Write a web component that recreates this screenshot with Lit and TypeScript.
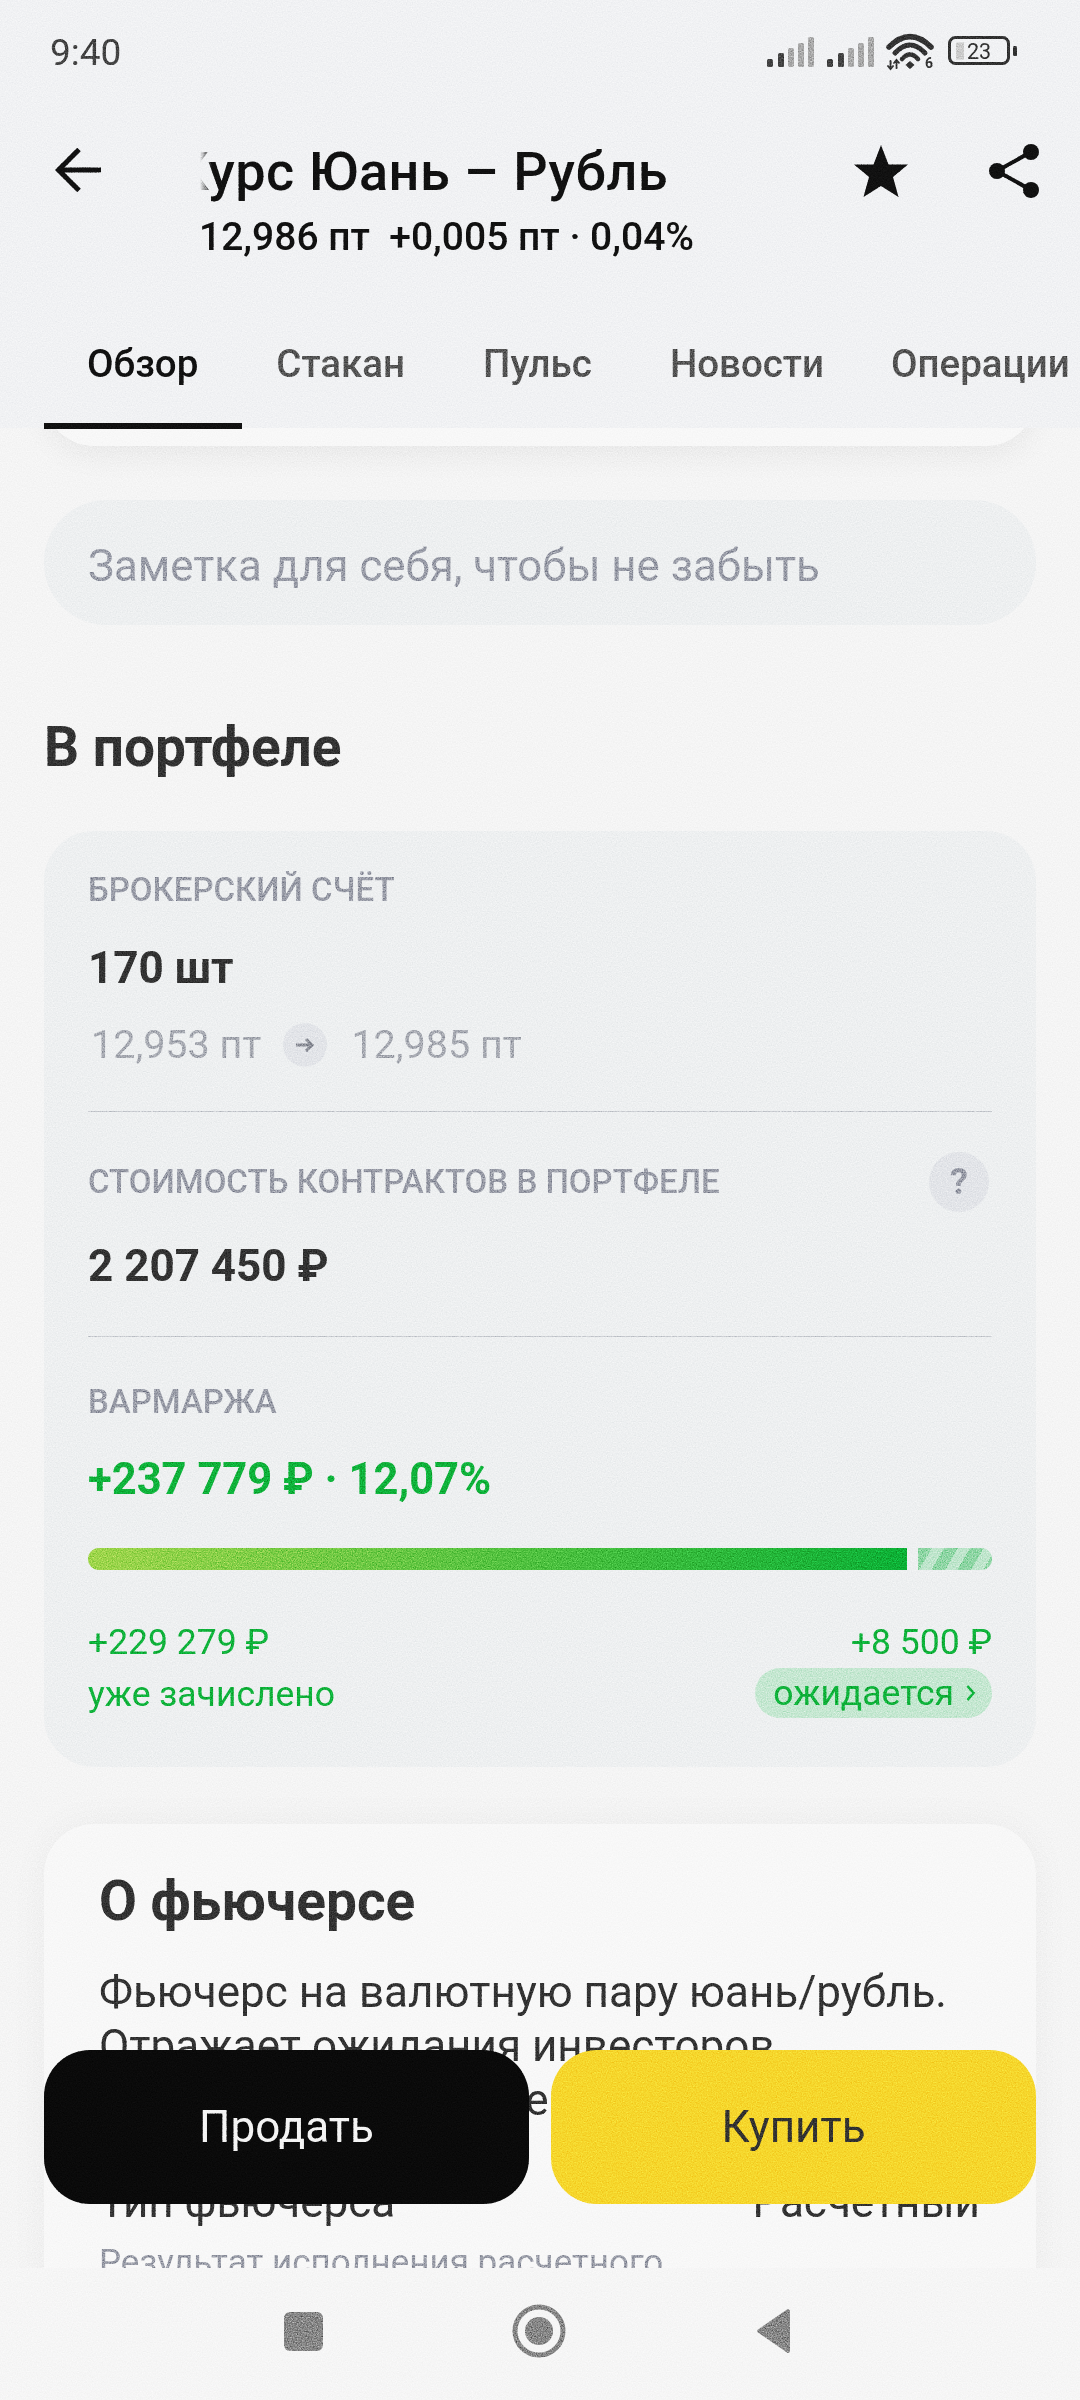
import { LitElement, html, css, svg } from "lit";
import { customElement } from "lit/decorators.js";

const bars = (dx: number) =>
  [
    [0, 59, "#444"],
    [11, 53, "#444"],
    [21, 48, "#aaa"],
    [31, 43, "#aaa"],
    [41, 37, "#aaa"],
  ].map(
    ([x, y, c]) =>
      svg`<rect x=${(x as number) + dx} y=${y} width="6" height=${67 - (y as number)} rx="1.5" fill=${c}></rect>`
  );

@customElement("app-root")
export class AppRoot extends LitElement {
  static styles = css`
    :host {
      display: flex;
      flex-direction: column;
      width: 1080px;
      height: 2400px;
      position: relative;
      overflow: hidden;
      isolation: isolate;
      background: #f5f5f5;
      font-family: Roboto, "Noto Sans", sans-serif;
      color: #333;
    }
    .top {
      flex: none;
      height: 428px;
      background: #f1f2f4;
      display: flex;
      flex-direction: column;
      position: relative;
      z-index: 2;
    }
    .status {
      height: 104px;
      padding: 0 50px;
      display: flex;
      align-items: center;
      justify-content: space-between;
      font-size: 37px;
      color: #444;
    }
    .status-icons {
      display: block;
      position: absolute;
      left: 0;
      top: 0;
    }
    .bar {
      height: 132px;
      display: flex;
      padding-left: 55px;
      position: relative;
    }
    .back {
      flex: none;
      width: 46px;
      height: 44px;
      margin-top: 44px;
    }
    .titles {
      margin-left: 99px;
      display: flex;
      flex-direction: column;
      margin-top: 36px;
    }
    .title-clip {
      flex: none;
      width: 480px;
      overflow: hidden;
      font-size: 54px;
      font-weight: 500;
      letter-spacing: 0.5px;
      line-height: 64px;
      color: #111;
      white-space: nowrap;
      position: relative;
    }
    .title-clip span {
      display: block;
      margin-left: -26px;
    }
    .title-clip::before {
      content: "";
      position: absolute;
      left: 0;
      top: 0;
      bottom: 0;
      width: 12px;
      background: linear-gradient(90deg, #f1f2f4, rgba(241, 242, 244, 0));
    }
    .sub {
      flex: none;
      font-size: 39px;
      font-weight: 500;
      line-height: 44px;
      color: #111;
      margin: 11px 0 0 -1px;
      white-space: pre;
    }
    .tabs {
      margin-top: 105px;
      padding-left: 87px;
      display: flex;
      gap: 78px;
      font-size: 38.5px;
      font-weight: 500;
      color: #555;
      white-space: nowrap;
      line-height: 46px;
    }
    .tabs span:last-child {
      margin-left: -11px;
    }
    .tabs .on {
      color: #111;
      position: relative;
    }
    .tabs .on::after {
      content: "";
      position: absolute;
      left: -43px;
      right: -44px;
      top: 82px;
      height: 6px;
      background: #111;
    }
    .scroll {
      flex: 1;
      min-height: 0;
      overflow: hidden;
      padding: 0 44px;
      display: flex;
      flex-direction: column;
    }
    .prev {
      flex: none;
      height: 100px;
      margin-top: -82px;
      background: #f8f8f8;
      border-radius: 50px;
      box-shadow: 0 10px 30px rgba(0, 0, 0, 0.05);
    }
    .note {
      flex: none;
      margin-top: 54px;
      height: 125px;
      box-sizing: border-box;
      padding: 6px 0 0 44px;
      border-radius: 62px;
      background: #eef0f1;
      display: flex;
      align-items: center;
      font-size: 43.8px;
      color: #9a9da8;
    }
    h2 {
      margin: 92px 0 0;
      font-size: 55px;
      font-weight: 700;
      line-height: 60px;
      color: #333;
    }
    .card {
      flex: none;
      margin-top: 54px;
      height: 936px;
      box-sizing: border-box;
      border-radius: 50px;
      background: #eef0f1;
      padding: 39px 44px 0;
    }
    .lab {
      font-size: 33px;
      font-weight: 500;
      color: #9a9da8;
      line-height: 40px;
      display: flex;
      align-items: center;
      justify-content: space-between;
    }
    .val {
      font-size: 44px;
      font-weight: 700;
      line-height: 56px;
      color: #333;
    }
    .q {
      width: 60px;
      height: 60px;
      border-radius: 50%;
      background: #e3e5e9;
      font-size: 36px;
      font-weight: 700;
      color: #9a9da8;
      display: flex;
      align-items: center;
      justify-content: center;
      margin-right: 3px;
    }
    .range {
      display: flex;
      align-items: center;
      font-size: 39.5px;
      color: #a7aab2;
      margin: 24px 0 0 3px;
      line-height: 50px;
    }
    .chip {
      width: 44px;
      height: 44px;
      border-radius: 50%;
      background: #e3e5e9;
      margin: 0 24px 0 22px;
      display: flex;
      align-items: center;
      justify-content: center;
    }
    hr {
      border: 0;
      height: 1px;
      background: #c8cbd0;
      margin: 0;
    }
    .green {
      color: #0fb33b;
    }
    .val.green {
      font-size: 43.5px;
    }
    .progress {
      display: flex;
      gap: 11px;
      height: 22px;
      margin-top: 40px;
    }
    .p1 {
      flex: 819;
      border-radius: 11px 0 0 11px;
      background: linear-gradient(90deg, #a0d64c, #0cb136);
    }
    .p2 {
      flex: 74;
      border-radius: 0 11px 11px 0;
      background: repeating-linear-gradient(120deg, #8fd6a5 0 12px, #c0e6cd 12px 22.5px);
    }
    .split {
      display: flex;
      justify-content: space-between;
      align-items: flex-start;
      margin-top: 47px;
      font-size: 35.5px;
      line-height: 50px;
    }
    .split > div:last-child {
      display: flex;
      flex-direction: column;
      align-items: flex-end;
    }
    .split .l2 {
      margin-top: 2px;
    }
    .pill {
      display: flex;
      align-items: center;
      gap: 12px;
      height: 50px;
      margin-top: 1px;
      padding: 0 16px 0 18px;
      border-radius: 25px;
      background: #c6e8d2;
    }
    .about {
      flex: none;
      margin-top: 57px;
      background: #f8f8f8;
      border-radius: 50px;
      padding: 42px 56px 42px 55px;
      box-shadow: 0 0 40px rgba(0, 0, 0, 0.04);
    }
    .about h3 {
      margin: 0;
      font-size: 55px;
      font-weight: 700;
      line-height: 70px;
    }
    .about p {
      margin: 29px 0 0;
      font-size: 44px;
      line-height: 54px;
      color: #333;
      white-space: nowrap;
    }
    .row {
      display: flex;
      justify-content: space-between;
      font-size: 44px;
      line-height: 54px;
      margin-top: 48px;
    }
    .hint {
      font-size: 35px;
      color: #9a9da8;
      line-height: 44px;
      margin-top: 12px;
    }
    .btns {
      position: absolute;
      left: 44px;
      right: 44px;
      top: 2050px;
      display: flex;
      gap: 22px;
      z-index: 3;
    }
    .btn {
      flex: 1;
      height: 154px;
      border-radius: 46px;
      display: flex;
      align-items: center;
      justify-content: center;
      font-size: 44px;
      background: #0a0a0a;
      color: #f4f4f4;
    }
    .btn.buy {
      background: #f6d72c;
      color: #333;
    }
    .nav {
      flex: none;
      height: 132px;
      background: #f6f6f6;
      position: relative;
      z-index: 2;
    }
    .nav svg {
      display: block;
    }
    .grain {
      position: absolute;
      left: 0;
      top: 0;
      z-index: 5;
      pointer-events: none;
      mix-blend-mode: overlay;
      opacity: 0.6;
    }
  `;

  render() {
    return html`
      <div class="top">
        <div class="status"><span>9:40</span></div>
        <div class="bar">
          <svg class="back" viewBox="0 0 46 44" fill="none" stroke="#111" stroke-width="5">
            <path d="M46 22H4M24 1.500 3.500 22 24 42.500"></path>
          </svg>
          <div class="titles">
            <div class="title-clip"><span>Курс Юань – Рубль</span></div>
            <div class="sub">12,986 пт  +0,005 пт · 0,04%</div>
          </div>
        </div>
        <div class="tabs">
          <span class="on">Обзор</span><span>Стакан</span><span>Пульс</span><span>Новости</span><span>Операции</span>
        </div>
        <svg class="status-icons" width="1080" height="230" viewBox="0 0 1080 230">
          ${bars(767)} ${bars(827)}
          <g fill="none" stroke="#333" stroke-linecap="round">
            <path d="M889 47Q910 26 931 47" stroke-width="5.500"></path>
            <path d="M895 53Q910 37 925 53" stroke-width="5"></path>
            <path d="M902 59Q910 50 918 59" stroke-width="4.500"></path>
          </g>
          <path d="M910 61l4.500 4-4.500 4-4.500-4z" fill="#333"></path>
          <path d="M890.500 60v9M887.500 65.500l3 3.500 3-3.500M896.500 69v-9M893.500 63.500l3-3.500 3 3.500" fill="none" stroke="#333" stroke-width="1.800"></path>
          <text x="925" y="68" font-size="14" font-weight="700" fill="#333" font-family="Roboto">6</text>
          <rect x="949.500" y="37.500" width="59" height="26" rx="6" fill="none" stroke="#333" stroke-width="3"></rect>
          <rect x="956" y="42.500" width="8" height="17" fill="#ccc"></rect>
          <text x="979" y="59" font-size="21.500" fill="#333" text-anchor="middle" font-family="Roboto">23</text>
          <rect x="1013" y="46" width="4" height="10" rx="1.500" fill="#333"></rect>
          <path d="M881 145L888.500 164.500H908L893 177L898.500 197L881 186L863.500 197L869 177L854 164.500H873.500Z" fill="#111"></path>
          <g fill="#111">
            <circle cx="1031" cy="152" r="8"></circle>
            <circle cx="997" cy="171" r="8"></circle>
            <circle cx="1031" cy="190" r="8"></circle>
          </g>
          <path d="M1031 152 997 171l34 19" fill="none" stroke="#111" stroke-width="4"></path>
        </svg>
      </div>
      <div class="scroll">
        <div class="prev"></div>
        <div class="note">Заметка для себя, чтобы не забыть</div>
        <h2>В портфеле</h2>
        <div class="card">
          <div class="lab">БРОКЕРСКИЙ СЧЁТ</div>
          <div class="val" style="margin-top:30px">170 шт</div>
          <div class="range">
            <span>12,953 пт</span>
            <span class="chip">
              <svg width="20" height="16" viewBox="0 0 20 16" fill="none" stroke="#8d9099" stroke-width="3">
                <path d="M1 8h16M11 2l6 6-6 6"></path>
              </svg>
            </span>
            <span>12,985 пт</span>
          </div>
          <hr style="margin-top:41px" />
          <div class="lab" style="margin-top:40px;height:60px"><span>СТОИМОСТЬ КОНТРАКТОВ В ПОРТФЕЛЕ</span><span class="q">?</span></div>
          <div class="val" style="margin-top:26px">2 207 450 ₽</div>
          <hr style="margin-top:42px" />
          <div class="lab" style="margin-top:45px">ВАРМАРЖА</div>
          <div class="val green" style="margin-top:30px">+237 779 ₽ · 12,07%</div>
          <div class="progress"><div class="p1"></div><div class="p2"></div></div>
          <div class="split green">
            <div><div>+229 279 ₽</div><div class="l2">уже зачислено</div></div>
            <div>
              <div>+8 500 ₽</div>
              <div class="pill">
                <span>ожидается</span>
                <svg width="10" height="18" viewBox="0 0 10 18" fill="none" stroke="#0fb33b" stroke-width="2.500"><path d="M1.500 2l6 7-6 7"></path></svg>
              </div>
            </div>
          </div>
        </div>
        <div class="about">
          <h3>О фьючерсе</h3>
          <p>Фьючерс на валютную пару юань/рубль.<br />Отражает ожидания инвесторов<br />относительно будущего курса</p>
          <div class="row"><span>Тип фьючерса</span><span>Расчетный</span></div>
          <div class="hint">Результат исполнения расчетного</div>
        </div>
      </div>
      <div class="btns">
        <div class="btn">Продать</div>
        <div class="btn buy">Купить</div>
      </div>
      <div class="nav">
        <svg width="1080" height="132" viewBox="0 2268 1080 132">
          <rect x="284" y="2312" width="39" height="39" rx="6" fill="#888"></rect>
          <circle cx="539" cy="2331" r="24" fill="none" stroke="#888" stroke-width="5"></circle>
          <circle cx="539" cy="2331" r="14" fill="#888"></circle>
          <path d="M790 2311v40a2 2 0 0 1-3 1.500l-29-20a2 2 0 0 1 0-3l29-20a2 2 0 0 1 3 1.500z" fill="#888"></path>
        </svg>
      </div>
      <svg class="grain" width="1080" height="2400" aria-hidden="true">
        <filter id="n" x="0" y="0" width="100%" height="100%" color-interpolation-filters="sRGB">
          <feTurbulence type="fractalNoise" baseFrequency="0.8" numOctaves="2" seed="4"></feTurbulence>
          <feColorMatrix type="matrix" values="0.33 0.33 0.33 0 0 0.33 0.33 0.33 0 0 0.33 0.33 0.33 0 0 0 0 0 0 1"></feColorMatrix>
          <feComponentTransfer>
            <feFuncR type="linear" slope="2" intercept="-0.5"></feFuncR>
            <feFuncG type="linear" slope="2" intercept="-0.5"></feFuncG>
            <feFuncB type="linear" slope="2" intercept="-0.5"></feFuncB>
          </feComponentTransfer>
        </filter>
        <rect width="1080" height="2400" filter="url(#n)"></rect>
      </svg>
    `;
  }
}
